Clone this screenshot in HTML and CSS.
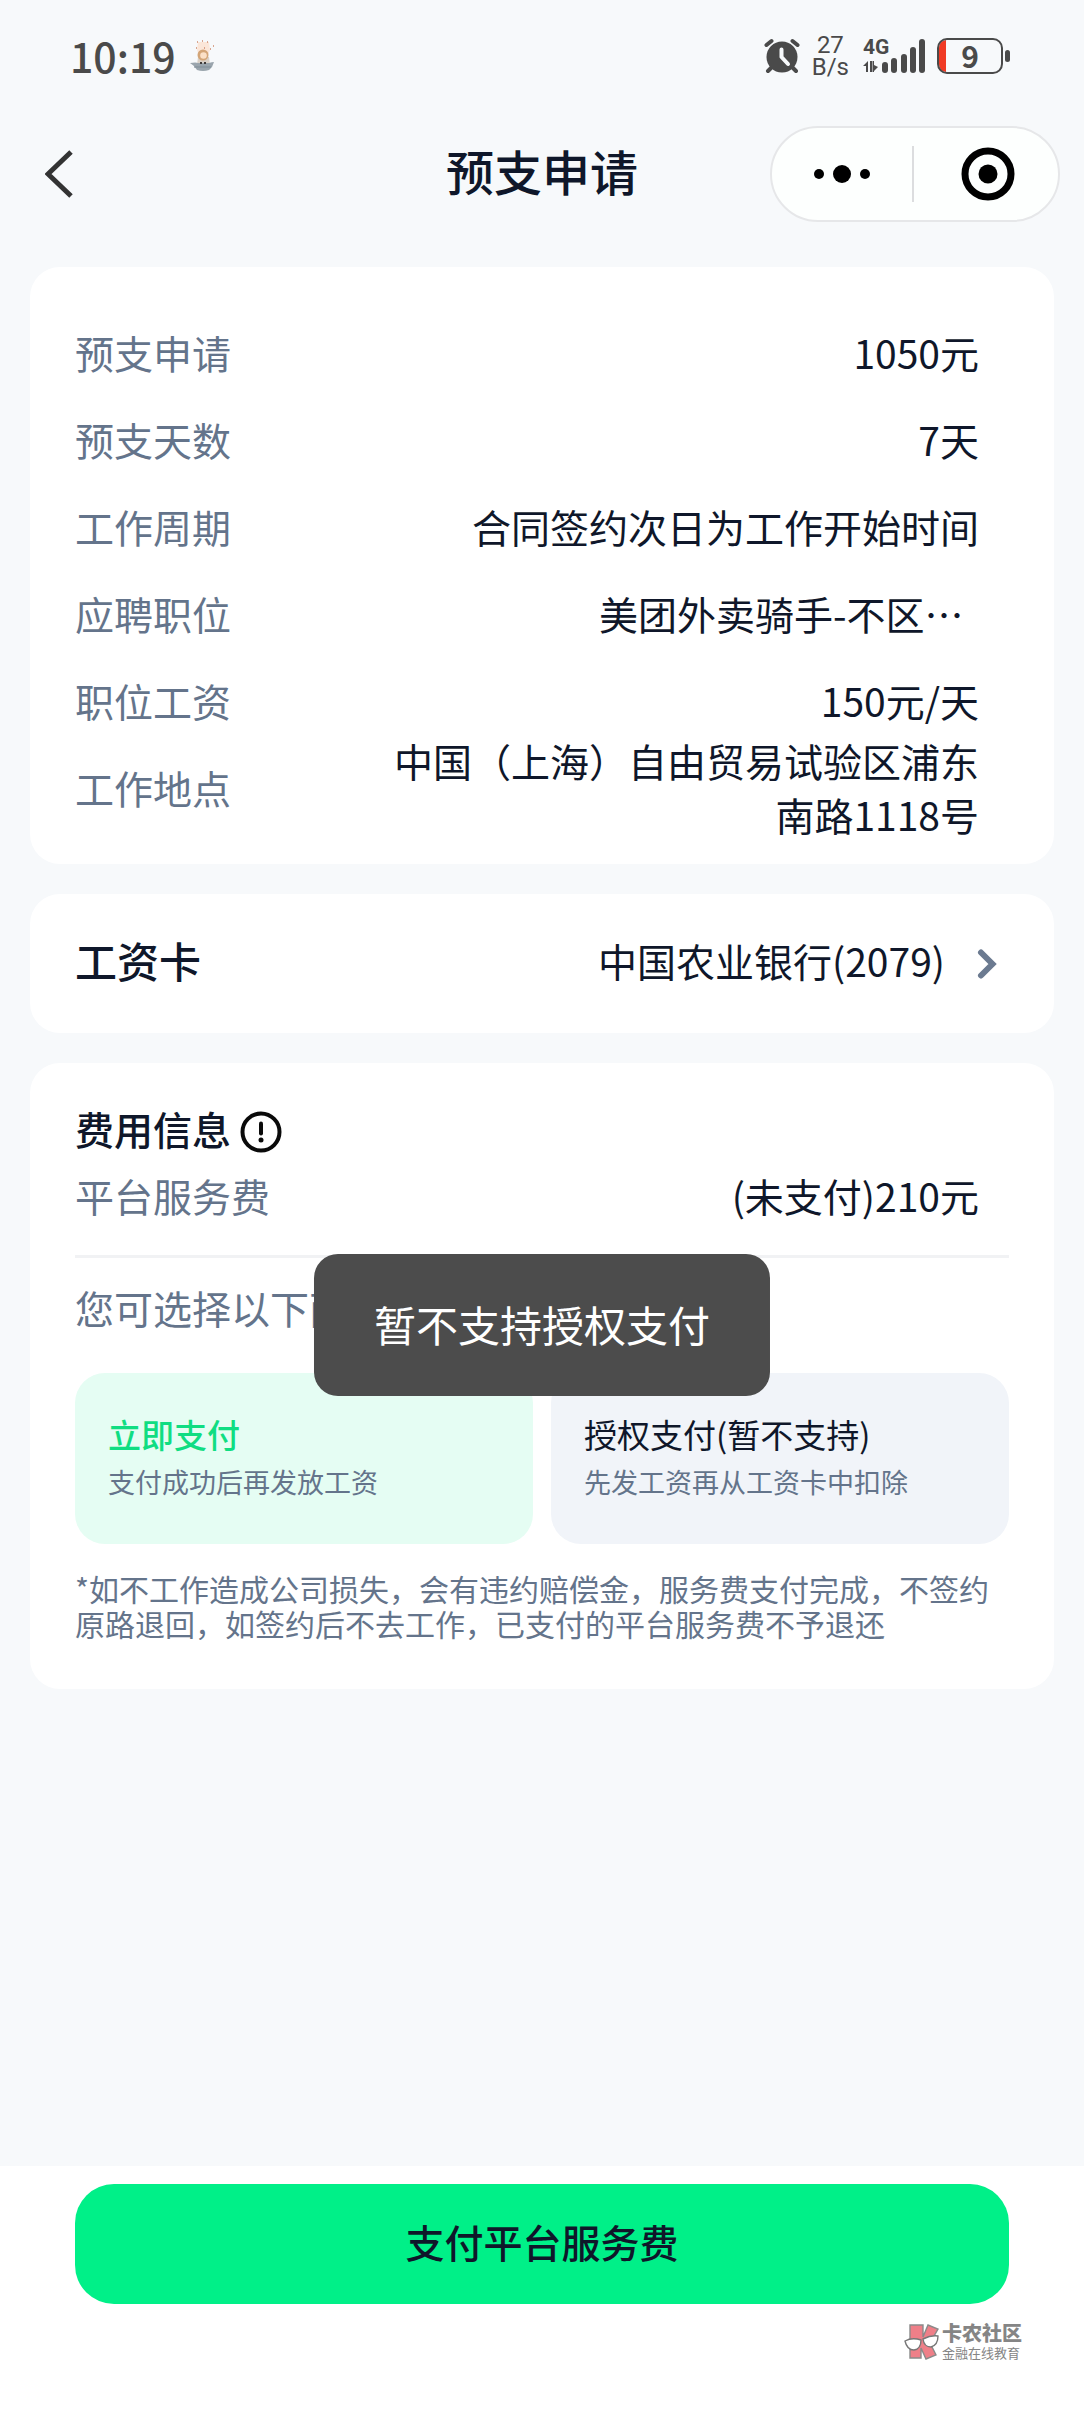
FILE: index.html
```html
<!DOCTYPE html>
<html lang="zh-CN">
<head>
<meta charset="utf-8">
<meta name="viewport" content="width=device-width, initial-scale=1">
<title>预支申请</title>
<link rel="stylesheet" href="styles.css">
</head>
<body>
<div class="status-bar">
  <div class="status-left">
    <span class="clock">10:19</span>
    <svg width="26" height="32" viewBox="0 0 26 32" aria-hidden="true">
      <path d="M8 2h11l1 8-2 5H9l-2-5z" fill="#fbe6d8"/>
      <path d="M7 2h1M12 1h1M17 2h1M23 6h1M6 8h1M14 8h1M20 9h1" stroke="#d08a6c" stroke-width="1.4"/>
      <path d="M8 17h11l1 8H7z" fill="#d9d0c6"/>
      <circle cx="13" cy="15" r="5.500" fill="#d3a577"/>
      <circle cx="13.500" cy="15.500" r="3.300" fill="#fbe0c6"/>
      <path d="M0 23q6-1 8 0h11q3-1 5-1l-2 5-3 3q-6 2-12 0L4 26z" fill="#9aa5ad"/>
      <path d="M4 27h17" stroke="#84909a" stroke-width="1.2"/>
      <path d="M10 23h2M14 23h2" stroke="#3f3a38" stroke-width="2"/>
    </svg>
  </div>
  <div class="status-right">
    <svg width="36" height="36" viewBox="0 0 36 36" aria-label="闹钟">
      <g stroke="#4a4a4a" stroke-linecap="round" fill="none">
        <path d="M2.500 7 7.500 3M33.500 7 28.500 3M8 29l-4 4M28 29l4 4" stroke-width="4"/>
      </g>
      <circle cx="18" cy="19" r="15.500" fill="#4a4a4a"/>
      <path d="M17.500 11.500V19l6.500 7" fill="none" stroke="#f7f9fb" stroke-width="4" stroke-linecap="round" stroke-linejoin="round"/>
    </svg>
    <span class="net-speed"><span>27</span><span>B/s</span></span>
    <span class="signal">
      <span class="signal-type">4G</span>
      <svg width="62" height="36" viewBox="0 0 62 36" aria-hidden="true">
        <g fill="#4a4a4a">
          <path d="M0 28l5-5v11H3v-6zM7 34V23h2v11zM11 23v11h-1.500V23zM11 27l4 2-4 4z"/>
          <rect x="19" y="24" width="6" height="11" rx="3"/>
          <rect x="28" y="20" width="6" height="15" rx="3"/>
          <rect x="38" y="16" width="6" height="19" rx="3"/>
          <rect x="47" y="9" width="6" height="26" rx="3"/>
          <rect x="56" y="1" width="6" height="34" rx="3"/>
        </g>
      </svg>
    </span>
    <span class="battery">
      <svg width="73" height="36" viewBox="0 0 73 36" aria-hidden="true">
        <path d="M9 2v32q-7-1-7-8V10q0-7 7-8z" fill="#f03a24"/>
        <rect x="1" y="1" width="64" height="34" rx="9" fill="none" stroke="#4a4a4a" stroke-width="2"/>
        <rect x="68" y="12" width="5" height="12" rx="2.500" fill="#4a4a4a"/>
      </svg>
      <span class="battery-level">9</span>
    </span>
  </div>
</div>

<header class="nav">
  <button class="back" type="button" aria-label="返回">
    <svg width="28" height="48" viewBox="0 0 28 48" aria-hidden="true"><path d="M26 2 3 24l23 22" fill="none" stroke="#333" stroke-width="5"/></svg>
  </button>
  <h1 class="nav-title">预支申请</h1>
  <div class="capsule">
    <button type="button" aria-label="更多">
      <svg width="56" height="20" viewBox="0 0 56 20" aria-hidden="true"><circle cx="5" cy="10" r="5"/><circle cx="28" cy="10" r="9"/><circle cx="51" cy="10" r="5"/></svg>
    </button>
    <button type="button" aria-label="关闭">
      <svg width="54" height="54" viewBox="0 0 54 54" aria-hidden="true"><circle cx="27" cy="27" r="23" fill="none" stroke="#000" stroke-width="7"/><circle cx="27" cy="27" r="9.500"/></svg>
    </button>
  </div>
</header>

<main class="content">
  <section class="card details">
    <dl>
      <div class="row"><dt>预支申请</dt><dd>1050元</dd></div>
      <div class="row"><dt>预支天数</dt><dd>7天</dd></div>
      <div class="row"><dt>工作周期</dt><dd>合同签约次日为工作开始时间</dd></div>
      <div class="row"><dt>应聘职位</dt><dd class="clipped">美团外卖骑手-不区…</dd></div>
      <div class="row"><dt>职位工资</dt><dd>150元/天</dd></div>
      <div class="row"><dt>工作地点</dt><dd>中国（上海）自由贸易试验区浦东南路1118号</dd></div>
    </dl>
  </section>

  <button class="card bank" type="button">
    <span class="bank-label">工资卡</span>
    <span class="bank-name">中国农业银行(2079)</span>
    <svg width="20" height="30" viewBox="0 0 20 30" aria-hidden="true"><path d="M4 3.500 15.500 15 4 26.500" fill="none" stroke="#6b7a90" stroke-width="6" stroke-linecap="round"/></svg>
  </button>

  <section class="card fees">
    <h2 class="fees-title">费用信息
      <svg width="42" height="42" viewBox="0 0 42 42" aria-hidden="true"><circle cx="21" cy="21" r="18.500" fill="none" stroke="#0a0a0a" stroke-width="4"/><path d="M21 12.500v10" stroke="#0a0a0a" stroke-width="4" stroke-linecap="round"/><circle cx="21" cy="29" r="2.500" fill="#0a0a0a"/></svg>
    </h2>
    <dl class="fee-line">
      <div class="row"><dt>平台服务费</dt><dd>(未支付)210元</dd></div>
    </dl>
    <p class="hint">您可选择以下两种支付方式</p>
    <div class="options">
      <button class="option selected" type="button" aria-pressed="true">
        <span class="option-title">立即支付</span>
        <span class="option-note">支付成功后再发放工资</span>
      </button>
      <button class="option" type="button" aria-pressed="false">
        <span class="option-title">授权支付(暂不支持)</span>
        <span class="option-note">先发工资再从工资卡中扣除</span>
      </button>
    </div>
    <p class="terms">*如不工作造成公司损失，会有违约赔偿金，服务费支付完成，不签约原路退回，如签约后不去工作，已支付的平台服务费不予退还</p>
  </section>
</main>

<footer class="footer">
  <button class="pay" type="button">支付平台服务费</button>
  <div class="brand">
    <svg width="36" height="36" viewBox="0 0 36 36" aria-hidden="true">
      <path d="M6 1h13v12l5-12 10 4-8 14 6 12-10 4-5-11v10H6z" fill="#ee7f88" stroke="#8a8a8a" stroke-width="1.400"/>
      <path d="M1 17q7-4 16-1 0 9-7 10-7 0-9-9zM19 15q8-4 15-3 0 9-7 11-7 0-8-8z" fill="#fff" stroke="#777" stroke-width="1.400"/>
    </svg>
    <span class="brand-text"><strong>卡农社区</strong><small>金融在线教育</small></span>
  </div>
</footer>

<div class="toast" role="status">暂不支持授权支付</div>
</body>
</html>
```
FILE: styles.css
```css
* {
  box-sizing: border-box;
}

body {
  display: flex;
  flex-direction: column;
  min-height: 100vh;
  margin: 0;
  background: #f7f9fb;
  color: #0f172a;
  font-family: "Noto Sans CJK SC", "Noto Sans", sans-serif;
  font-size: 39px;
  line-height: 54px;
}

h1, h2, p, dl, dd {
  margin: 0;
}

button {
  margin: 0;
  padding: 0;
  border: 0;
  background: none;
  color: inherit;
  font: inherit;
  text-align: left;
}

svg {
  display: block;
  flex: none;
}

/* Status bar */
.status-bar {
  display: flex;
  align-items: center;
  justify-content: space-between;
  height: 112px;
  padding: 0 74px 0 70px;
  color: #4a4a4a;
}

.status-left,
.status-right {
  display: flex;
  align-items: center;
}

.status-left {
  gap: 14px;
}

.status-right {
  gap: 12px;
}

.clock {
  padding-bottom: 2px;
  font-size: 41px;
  font-weight: 500;
}

.net-speed {
  display: flex;
  flex-direction: column;
  margin-right: 2px;
  font-family: Roboto, sans-serif;
  font-size: 24px;
  line-height: 22px;
  text-align: center;
}

.signal,
.battery {
  position: relative;
}

.signal-type {
  position: absolute;
  top: 0;
  left: 0;
  font-family: Roboto, sans-serif;
  font-size: 21px;
  font-weight: 700;
  line-height: 18px;
}

.battery-level {
  position: absolute;
  inset: 0 7px 0 0;
  font-size: 30px;
  font-weight: 700;
  line-height: 34px;
  text-align: center;
}

/* Navigation */
.nav {
  display: grid;
  grid-template-columns: 1fr auto 1fr;
  align-items: center;
  height: 124px;
  padding: 0 24px 0 45px;
}

.nav-title {
  padding: 0 21px 8px 0;
  font-size: 48px;
  font-weight: 500;
  line-height: 64px;
}

.back {
  justify-self: start;
}

.capsule {
  display: flex;
  align-items: center;
  justify-self: end;
  width: 290px;
  height: 96px;
  border: 2px solid #e6e7e9;
  border-radius: 48px;
  background: #fdfffe;
}

.capsule button {
  display: flex;
  flex: 1;
  align-items: center;
  justify-content: center;
  height: 56px;
}

.capsule button + button {
  padding-left: 4px;
  border-left: 2px solid #dcdddf;
}

/* Cards */
.content {
  display: flex;
  flex: 1;
  flex-direction: column;
  gap: 30px;
  padding: 31px 30px;
}

.card {
  border-radius: 30px;
  background: #fff;
}

.details {
  padding: 41px 75px 34px 45px;
}

.row {
  display: flex;
  align-items: center;
  justify-content: space-between;
  height: 87px;
}

dt {
  flex: none;
  color: #64748b;
}

dd {
  max-width: 600px;
  text-align: right;
}

.clipped {
  width: 380px;
  text-align: left;
}

.bank {
  display: flex;
  align-items: center;
  height: 139px;
  padding: 0 57px 0 45px;
}

.bank-label,
.bank-name {
  padding-bottom: 7px;
}

.bank-label {
  flex: 1;
  font-size: 42px;
  font-weight: 500;
}

.bank-name {
  margin-right: 32px;
}

.fees {
  padding: 37px 45px 47px;
}

.fees-title {
  display: flex;
  align-items: center;
  gap: 9px;
  height: 56px;
  font-size: 39px;
  font-weight: 500;
}

.fees-title svg {
  margin-top: 7px;
}

.fee-line {
  padding: 0 30px 22px 0;
  border-bottom: 3px solid #f1f2f4;
}

.fee-line .row {
  height: 77px;
}

.hint {
  padding: 22px 0 39px;
  color: #64748b;
}

.options {
  display: grid;
  grid-template-columns: 1fr 1fr;
  gap: 18px;
}

.option {
  display: flex;
  flex-direction: column;
  height: 171px;
  padding: 37px 33px;
  border-radius: 30px;
  background: #f1f4f9;
}

.option-title {
  font-size: 33px;
  line-height: 48px;
}

.option-note {
  color: #64748b;
  font-size: 27px;
  line-height: 48px;
}

.selected {
  background: #e5fdf3;
}

.selected .option-title {
  color: #10dd82;
  font-weight: 500;
}

.terms {
  padding-top: 27px;
  color: #64748b;
  font-size: 30px;
  line-height: 35px;
}

.fees .terms {
  padding-bottom: 1px;
}

/* Footer */
.footer {
  display: flex;
  flex-direction: column;
  padding: 18px 62px 50px 75px;
  background: #fff;
}

.pay {
  height: 120px;
  margin-right: 13px;
  padding-bottom: 6px;
  border-radius: 39px;
  background: #00f088;
  font-weight: 500;
  text-align: center;
}

.brand {
  display: flex;
  align-items: center;
  align-self: flex-end;
  gap: 2px;
  margin-top: 18px;
  color: #858585;
}

.brand-text {
  display: flex;
  flex-direction: column;
}

.brand strong {
  font-size: 20px;
  font-weight: 900;
  line-height: 22px;
}

.brand small {
  font-size: 13px;
  line-height: 18px;
}

.toast {
  position: fixed;
  top: 52%;
  left: 50%;
  padding: 43px 60px 45px;
  transform: translateX(-50%);
  border-radius: 24px;
  background: #4c4c4c;
  color: #fff;
  font-size: 42px;
  white-space: nowrap;
}
```
